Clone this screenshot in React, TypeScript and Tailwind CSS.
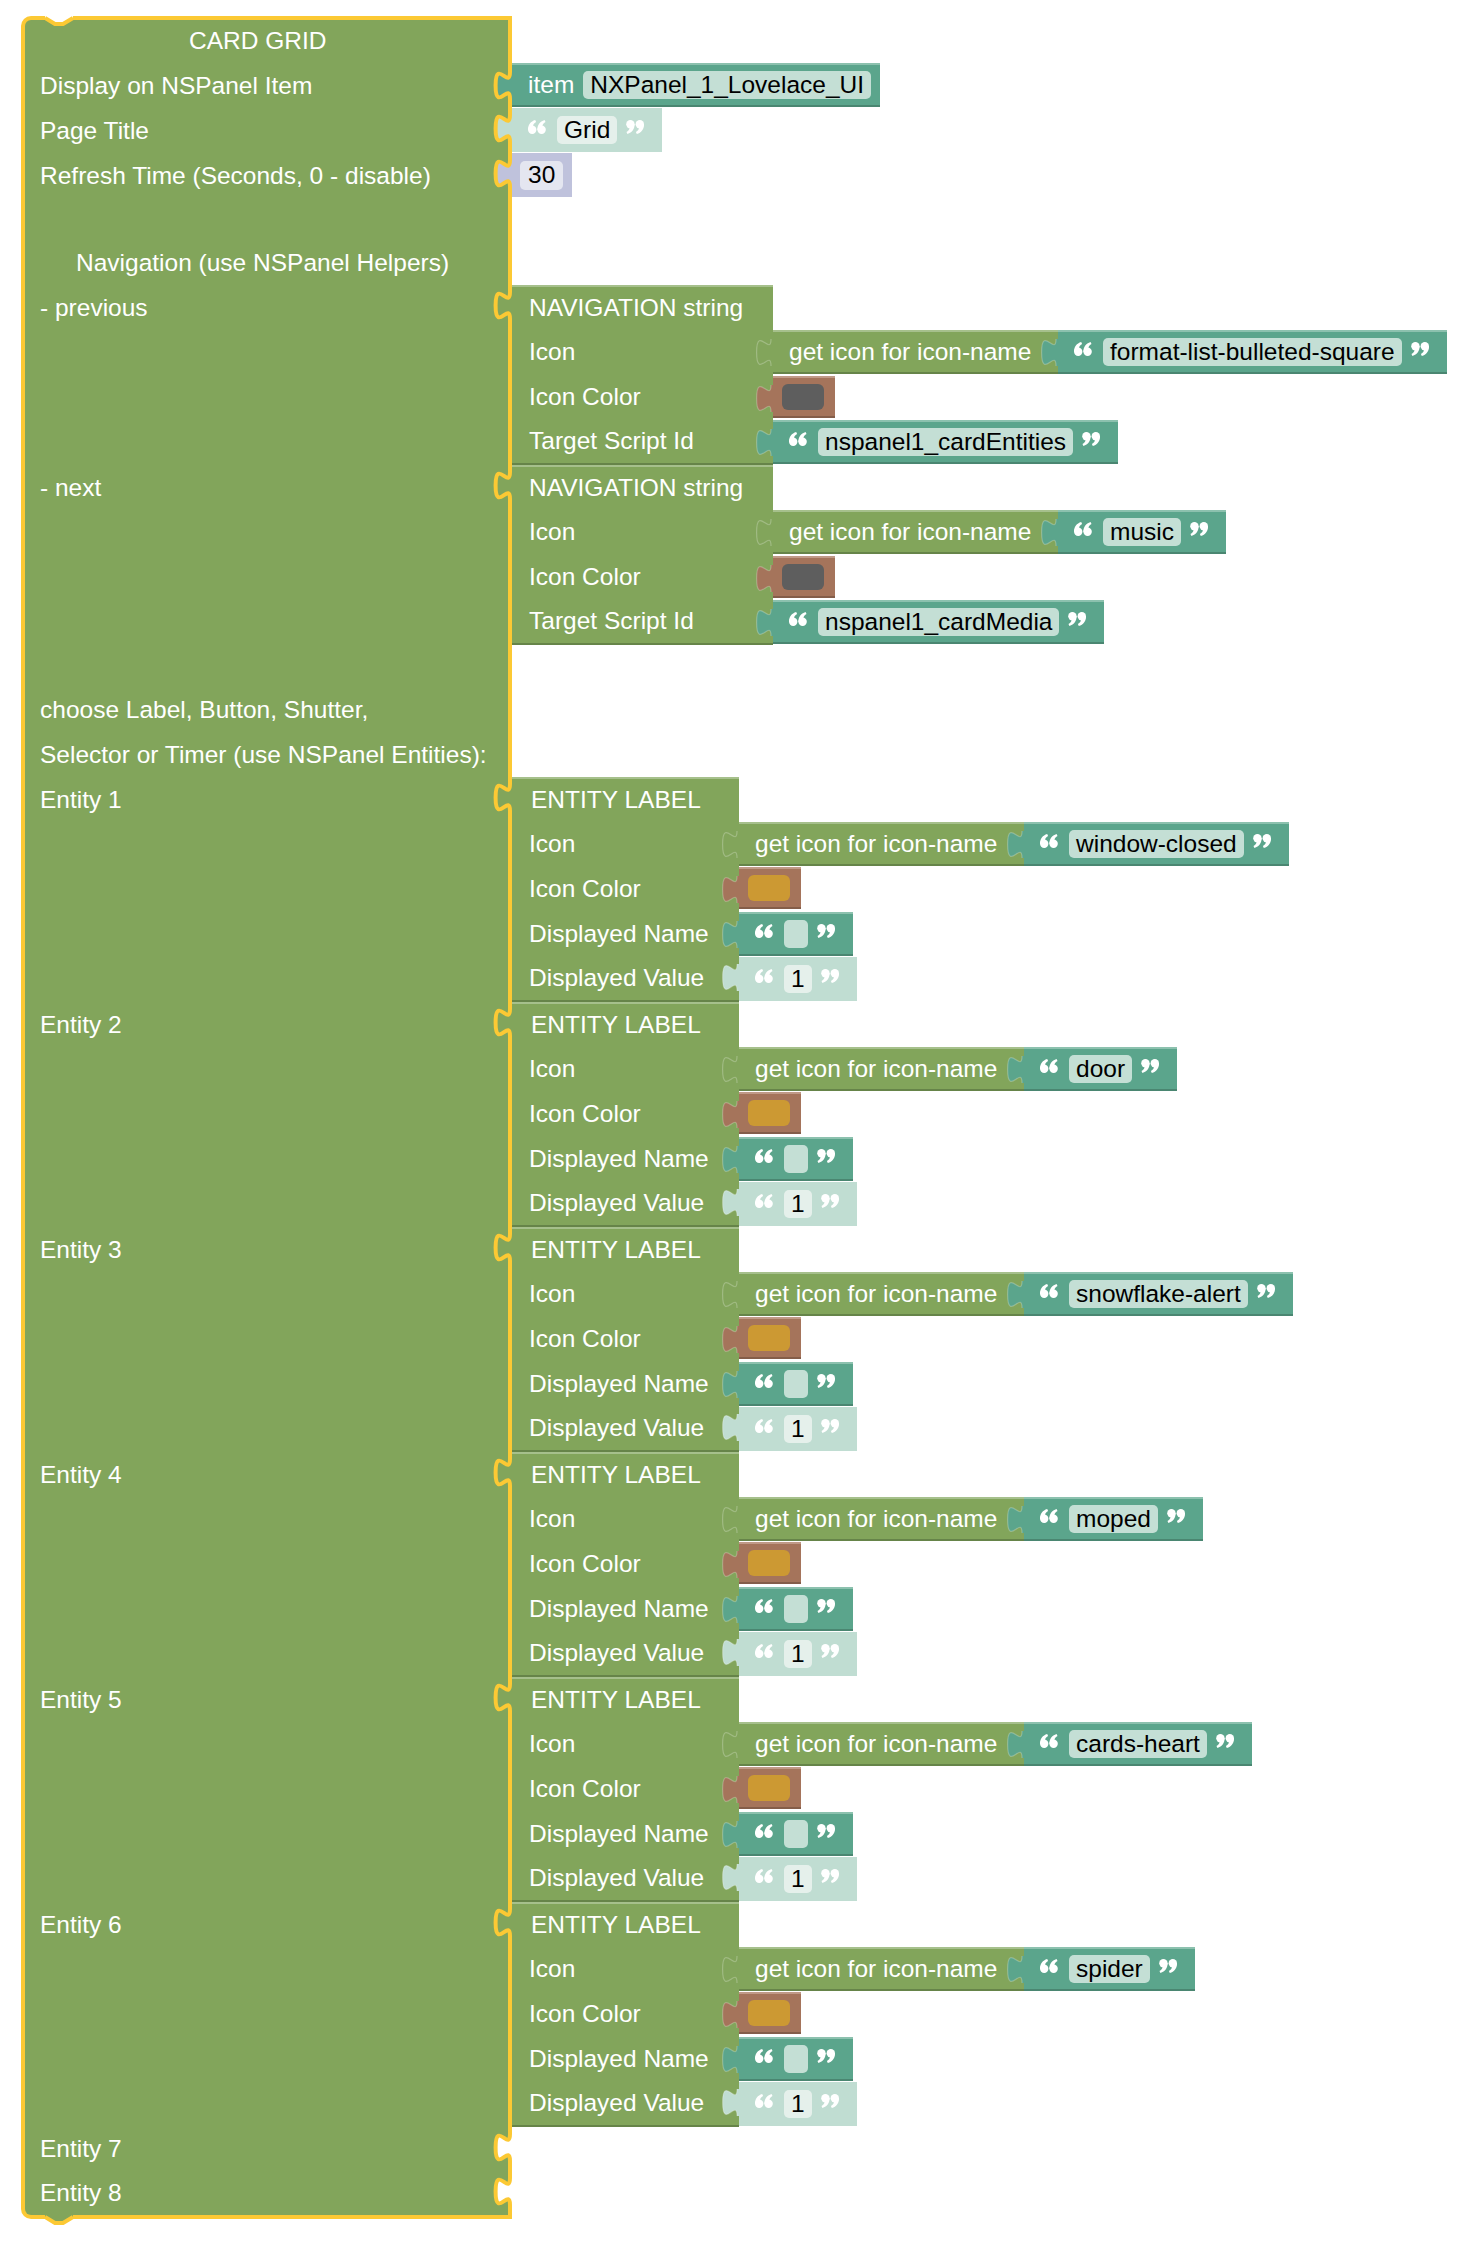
import React from 'react';

type Tone = 'green' | 'teal' | 'light' | 'number' | 'brown' | 'empty';

const tabFill: Record<Tone, string> = {
    green: '#82a55b',
    teal: '#5ba58c',
    light: '#c0ddd2',
    number: '#bfc2dc',
    brown: '#a5745b',
    empty: '#ffffff',
};

// puzzle tab of an output connection, drawn over the parent's right edge
const Tab: React.FC<{ tone: Tone; hot?: boolean }> = ({ tone, hot }) => {
    const curve = 'M20 2c0 18-14.4-14.4-14.4 13.5s14.4-4.5 14.4 13.5';
    return (
        <svg className="pointer-events-none absolute left-[-22px] top-[5px]" width="24" height="31" viewBox="0 0 24 31">
            <path d={`${curve}L24 29L24 2Z`} fill={tabFill[tone]} />
            <path
                d={curve}
                fill="none"
                stroke={hot ? '#fcc934' : 'rgba(255,255,255,0.25)'}
                strokeWidth={hot ? 4 : 1.2}
            />
        </svg>
    );
};

const Quote: React.FC<{ close?: boolean }> = ({ close }) => (
    <svg className={close ? 'mb-[6px] shrink-0 rotate-180' : 'mb-[6px] shrink-0'} width="18" height="14" viewBox="0 0 18 14">
        <g fill="#ffffff">
            <circle cx="4.2" cy="9.8" r="4.2" />
            <path d="M0.05 10.2C-0.3 5.2 2.4 1.5 7.2 0L8.1 2C5.8 3.2 4.8 5 5 7Z" />
            <circle cx="13.6" cy="9.8" r="4.2" />
            <path d="M9.45 10.2C9.1 5.2 11.8 1.5 16.6 0L17.5 2C15.2 3.2 14.2 5 14.4 7Z" />
        </g>
    </svg>
);

const TextBlock: React.FC<{ value: string; shadow?: boolean; hot?: boolean }> = ({ value, shadow, hot }) => (
    <div
        className={
            shadow
                ? 'relative flex h-[44px] shrink-0 items-center bg-[#c0ddd2] pl-[16px] pr-[18px]'
                : 'relative flex h-[44px] shrink-0 items-center border-y-2 border-t-[#8cc1ae] border-b-[#4a8671] bg-[#5ba58c] pl-[16px] pr-[18px]'
        }
    >
        <Tab tone={shadow ? 'light' : 'teal'} hot={hot} />
        <Quote />
        <span
            className={
                shadow
                    ? 'ml-[11px] mr-[9px] flex h-[28px] min-w-[24px] items-center justify-center rounded-[5px] bg-[#e5f0eb] px-[7px] text-black'
                    : 'ml-[11px] mr-[9px] flex h-[28px] min-w-[24px] items-center justify-center rounded-[5px] bg-[#c4dfd5] px-[7px] text-black'
            }
        >
            {value}
        </span>
        <Quote close />
    </div>
);

const ItemBlock: React.FC = () => (
    <div className="relative flex h-[44px] items-center gap-[9px] border-y-2 border-t-[#8cc1ae] border-b-[#4a8671] bg-[#5ba58c] pl-[16px] pr-[9px] text-white">
        <Tab tone="teal" hot />
        <span>item</span>
        <span className="flex h-[28px] items-center rounded-[5px] bg-[#c4dfd5] px-[7px] text-black">NXPanel_1_Lovelace_UI</span>
    </div>
);

const NumberBlock: React.FC<{ value: number }> = ({ value }) => (
    <div className="relative flex h-[44px] items-center bg-[#bfc2dc] pl-[8px] pr-[9px]">
        <Tab tone="number" hot />
        <span className="flex h-[29px] items-center rounded-[5px] bg-[#e4e6f0] px-[8px] text-black">{value}</span>
    </div>
);

const ColourBlock: React.FC<{ gold?: boolean }> = ({ gold }) => (
    <div className="relative flex h-[42px] w-[62px] items-center border-y-2 border-t-[#c09a87] border-b-[#845d49] bg-[#a5745b] pl-[9px]">
        <Tab tone="brown" />
        <span className={gold ? 'h-[26px] w-[42px] rounded-[6px] bg-[#cc9933]' : 'h-[26px] w-[42px] rounded-[6px] bg-[#5e5e5e]'} />
    </div>
);

const IconBlock: React.FC<{ name: string }> = ({ name }) => (
    <div className="flex items-start">
        <div className="relative flex h-[44px] w-[285px] shrink-0 items-center border-y-2 border-t-[#a6c08c] border-b-[#668449] bg-[#82a55b] pl-[16px] text-white">
            <Tab tone="green" />
            get icon for icon-name
        </div>
        <TextBlock value={name} />
    </div>
);

const NavBlock: React.FC<{ icon: string; target: string }> = ({ icon, target }) => (
    <div className="relative">
        <Tab tone="green" hot />
        <div className="flex h-[45px] w-[261px] items-center border-t-2 border-t-[#a6c08c] bg-[#82a55b] pl-[17px] text-white">
            NAVIGATION string
        </div>
        <div className="flex h-[45px]">
            <div className="flex w-[261px] shrink-0 items-center bg-[#82a55b] pl-[17px] text-white">Icon</div>
            <IconBlock name={icon} />
        </div>
        <div className="flex h-[45px]">
            <div className="flex w-[261px] shrink-0 items-center bg-[#82a55b] pl-[17px] text-white">Icon Color</div>
            <div className="pt-[1px]">
                <ColourBlock />
            </div>
        </div>
        <div className="flex h-[45px]">
            <div className="flex w-[261px] shrink-0 items-center border-b-2 border-b-[#668449] bg-[#82a55b] pl-[17px] text-white">
                Target Script Id
            </div>
            <TextBlock value={target} />
        </div>
    </div>
);

const EntityBlock: React.FC<{ icon: string }> = ({ icon }) => (
    <div className="relative">
        <Tab tone="green" hot />
        <div className="flex h-[45px] w-[227px] items-center border-t-2 border-t-[#a6c08c] bg-[#82a55b] pl-[19px] text-white">
            ENTITY LABEL
        </div>
        <div className="flex h-[45px]">
            <div className="flex w-[227px] shrink-0 items-center bg-[#82a55b] pl-[17px] text-white">Icon</div>
            <IconBlock name={icon} />
        </div>
        <div className="flex h-[45px]">
            <div className="flex w-[227px] shrink-0 items-center bg-[#82a55b] pl-[17px] text-white">Icon Color</div>
            <ColourBlock gold />
        </div>
        <div className="flex h-[45px]">
            <div className="flex w-[227px] shrink-0 items-center bg-[#82a55b] pl-[17px] text-white">Displayed Name</div>
            <TextBlock value="" />
        </div>
        <div className="flex h-[45px]">
            <div className="flex w-[227px] shrink-0 items-center border-b-2 border-b-[#668449] bg-[#82a55b] pl-[17px] text-white">
                Displayed Value
            </div>
            <TextBlock value="1" shadow />
        </div>
    </div>
);

// one input row of the CARD GRID block: label on the left, attached block on the right
const Row: React.FC<{ label?: string; indent?: boolean; children?: React.ReactNode }> = ({ label, indent, children }) => (
    <div className="flex">
        <div className="w-[491px] shrink-0 border-x-4 border-[#fcc934] bg-[#82a55b] text-white">
            <div className={indent ? 'flex h-[45px] items-center pl-[51px] pt-[1px]' : 'flex h-[45px] items-center pl-[15px] pt-[1px]'}>{label}</div>
        </div>
        {children}
    </div>
);

const entities = ['window-closed', 'door', 'snowflake-alert', 'moped', 'cards-heart', 'spider'];

const App: React.FC = () => {
    return (
        <div className="min-h-screen bg-white pl-[21px] pt-[16px] font-['Liberation_Sans',Arial,sans-serif] text-[24.5px] leading-none">
            <div className="relative flex h-[47px] w-[491px] items-center rounded-tl-[10px] border-x-4 border-t-4 border-[#fcc934] bg-[#82a55b] pl-[164px] text-white">
                <svg className="absolute left-[20px] top-[-4px]" width="30" height="12" viewBox="0 0 30 12">
                    <path d="M0 0V2L10 8H18L28 2V0Z" fill="#ffffff" />
                    <path d="M0 2L10 8H18L28 2" fill="none" stroke="#fcc934" strokeWidth="4" strokeLinejoin="round" />
                </svg>
                CARD GRID
            </div>

            <Row label="Display on NSPanel Item">
                <ItemBlock />
            </Row>
            <Row label="Page Title">
                <TextBlock value="Grid" shadow hot />
            </Row>
            <Row label="Refresh Time (Seconds, 0 - disable)">
                <NumberBlock value={30} />
            </Row>
            <div className="h-[42px] w-[491px] border-x-4 border-[#fcc934] bg-[#82a55b]" />
            <Row label="Navigation (use NSPanel Helpers)" indent />
            <Row label="- previous">
                <NavBlock icon="format-list-bulleted-square" target="nspanel1_cardEntities" />
            </Row>
            <Row label="- next">
                <NavBlock icon="music" target="nspanel1_cardMedia" />
            </Row>
            <div className="h-[42px] w-[491px] border-x-4 border-[#fcc934] bg-[#82a55b]" />
            <Row label="choose Label, Button, Shutter," />
            <Row label="Selector or Timer (use NSPanel Entities):" />
            {entities.map((icon, i) => (
                <Row key={icon} label={`Entity ${i + 1}`}>
                    <EntityBlock icon={icon} />
                </Row>
            ))}

            <div className="flex">
                <div className="flex h-[44px] w-[491px] items-center border-x-4 border-[#fcc934] bg-[#82a55b] pl-[15px] pt-[1px] text-white">Entity 7</div>
                <div className="relative h-[44px] w-0">
                    <Tab tone="empty" hot />
                </div>
            </div>
            <div className="flex">
                <div className="relative flex h-[48px] w-[491px] items-center rounded-bl-[10px] border-x-4 border-b-4 border-[#fcc934] bg-[#82a55b] pl-[15px] pt-[1px] text-white">
                    Entity 8
                    <svg className="absolute bottom-[-10px] left-[20px]" width="30" height="14" viewBox="0 0 30 14">
                        <path d="M0 0V6L10 12H18L28 6V0Z" fill="#82a55b" />
                        <path d="M0 6L10 12H18L28 6" fill="none" stroke="#fcc934" strokeWidth="4" strokeLinejoin="round" />
                    </svg>
                </div>
                <div className="relative h-[44px] w-0">
                    <Tab tone="empty" hot />
                </div>
            </div>
        </div>
    );
};

export default App;
